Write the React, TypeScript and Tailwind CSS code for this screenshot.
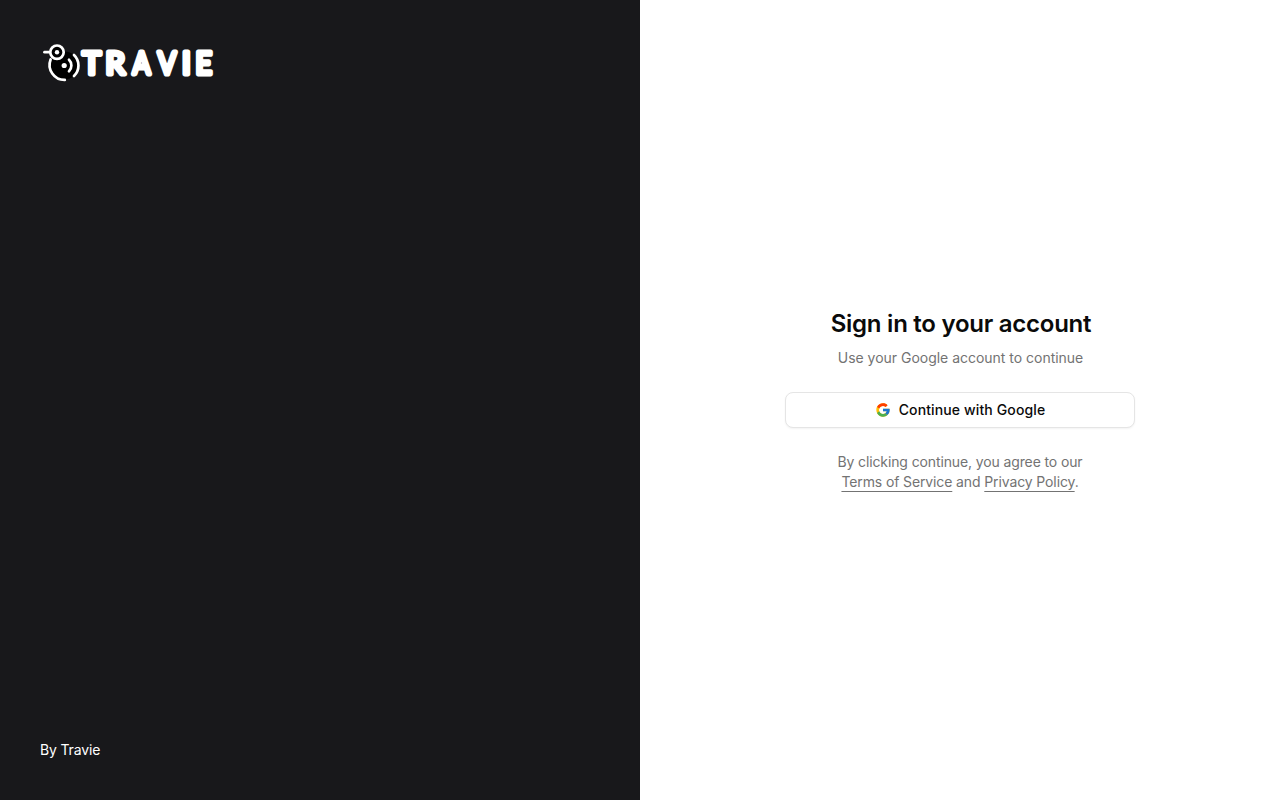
import React from 'react';
import { FcGoogle } from 'react-icons/fc';

const Logo: React.FC = () => (
  <svg width="180" height="46" viewBox="40 40 180 46" fill="none" role="img" aria-label="Travie">
    <circle cx="64.5" cy="65.5" r="14" fill="#000" />
    <g stroke="#fff" strokeWidth="2.7" strokeLinecap="round">
      <path d="M44.5 52.2H50" />
      <path d="M50.6 59.5A15 15 0 0 0 64.8 79.9" />
      <path d="M69 59.8A8 8 0 0 1 69 71.2" />
      <path d="M74 55A14.6 14.6 0 0 1 74 76" />
      <circle cx="57" cy="52.2" r="6.7" fill="#000" />
    </g>
    <circle cx="57" cy="52.2" r="2.2" fill="#fff" />
    <circle cx="64.2" cy="65.5" r="2.6" fill="#fff" />
    <g
      fill="#fff"
      stroke="#fff"
      strokeWidth="4.8"
      strokeLinejoin="round"
      strokeLinecap="round"
      fontFamily="Lato, sans-serif"
      fontWeight="400"
      fontSize="31"
    >
      <text x="82.4" y="73.6">T</text>
      <text x="105.4" y="73.6">R</text>
      <text x="132.8" y="73.6" textLength="17.5" lengthAdjust="spacingAndGlyphs">A</text>
      <text x="158" y="73.6" textLength="18" lengthAdjust="spacingAndGlyphs">V</text>
      <text x="182" y="73.6">I</text>
      <text x="195.4" y="73.6" textLength="16.4" lengthAdjust="spacingAndGlyphs">E</text>
    </g>
  </svg>
);

export default function App() {
  return (
    <div className="grid h-screen grid-cols-2 bg-white font-[Inter,sans-serif]">
      <div className="flex flex-col justify-between bg-[#18181b] p-10 text-white">
        <Logo />
        <p className="text-sm tracking-[-0.15px]">By Travie</p>
      </div>

      <div className="flex items-center justify-center">
        <div className="flex w-[350px] flex-col gap-6 text-center">
          <div className="flex flex-col gap-2">
            <h1 className="pl-0.5 text-2xl font-semibold tracking-[-0.25px] text-[#0a0a0a]">Sign in to your account</h1>
            <p className="pl-px text-sm tracking-[-0.02px] text-[#737373]">Use your Google account to continue</p>
          </div>

          <button className="flex h-9 w-full items-center justify-center gap-2 rounded-lg border border-[#e5e5e5] bg-white text-sm font-medium tracking-[0.12px] text-[#0a0a0a] shadow-xs">
            <FcGoogle className="size-4" />
            Continue with Google
          </button>

          <p className="px-8 text-sm tracking-[-0.12px] text-[#737373]">
            By clicking continue, you agree to our{' '}
            <a href="#" className="underline underline-offset-4">Terms of Service</a> and{' '}
            <a href="#" className="underline underline-offset-4">Privacy Policy</a>.
          </p>
        </div>
      </div>
    </div>
  );
}
